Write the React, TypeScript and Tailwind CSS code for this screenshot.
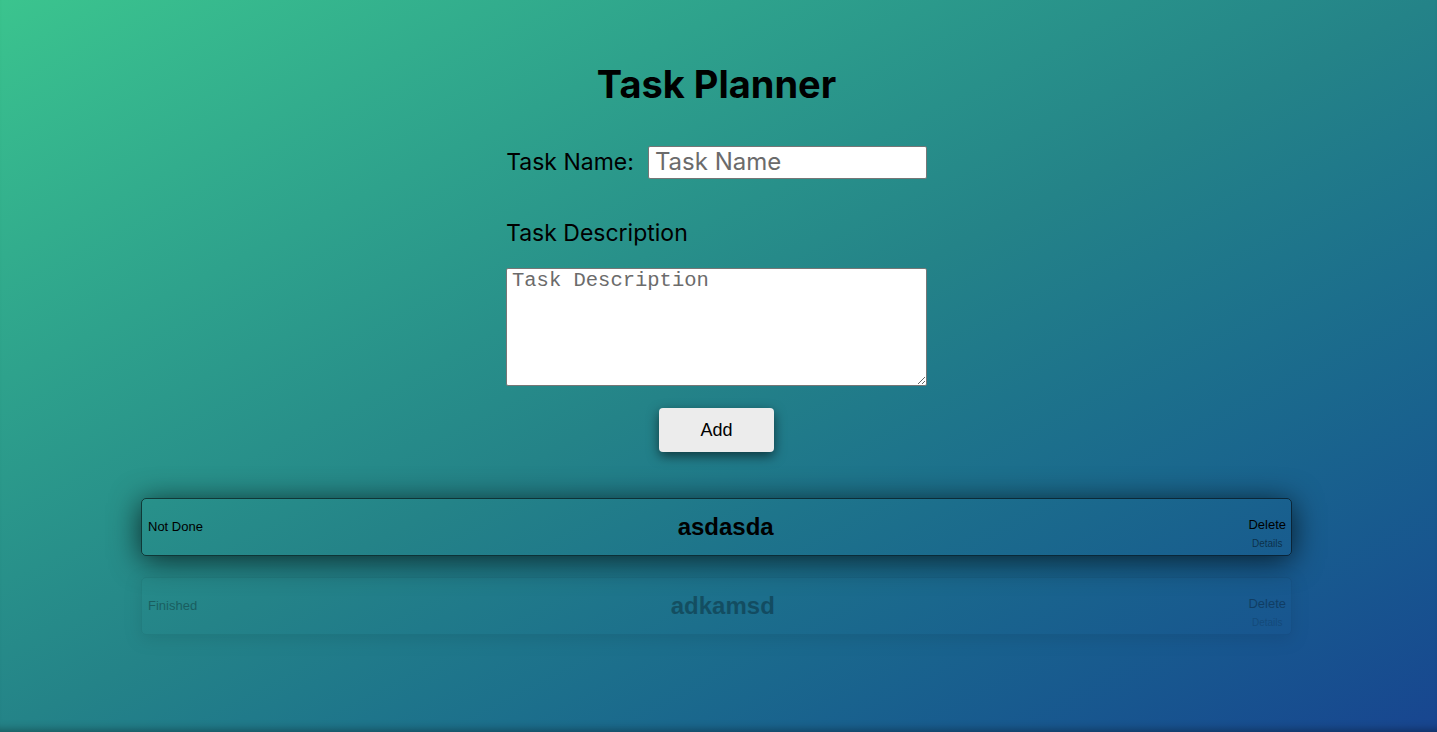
import { useState } from "react";

type Task = { name: string; done: boolean };

const TaskRow = ({ task }: { task: Task }) => {
  return (
    <div
      className={
        task.done
          ? "flex w-[1151px] h-[58px] items-center justify-between rounded-[5px] border border-black/20 pl-[6px] pr-[5px] opacity-30 shadow-[0_4px_16px_rgba(0,0,0,0.3)]"
          : "flex w-[1151px] h-[58px] items-center justify-between rounded-[5px] border border-black/60 pl-[6px] pr-[5px] shadow-[0_4px_30px_rgba(0,0,0,0.7)]"
      }
    >
      <span className="text-[13px] text-black">{task.done ? "Finished" : "Not Done"}</span>
      <span className="text-[24px] font-bold text-black">{task.name}</span>
      <div className="flex flex-col items-center mt-[14px]">
        <button className="text-[13px] text-black leading-[18px]">Delete</button>
        <span className="text-[10px] text-black/50 leading-[14px] mt-[3px]">Details</span>
      </div>
    </div>
  );
};

export default function App() {
  const [tasks] = useState<Task[]>([
    { name: "asdasda", done: false },
    { name: "adkamsd", done: true },
  ]);

  return (
    <div
      className="h-[732px] w-full overflow-hidden pr-[4px] bg-gradient-to-br from-[#3bc48e] via-[#248388] to-[#184590] flex flex-col items-center shadow-[inset_0_-10px_10px_-8px_rgba(0,0,0,0.35)]"
      style={{ fontFamily: '"Liberation Sans", Arial, sans-serif' }}
    >
      <h1 className="mt-[60px] text-[38px] font-bold text-black leading-[48px] font-[Inter,sans-serif]">
        Task Planner
      </h1>

      <div className="mt-[37px] flex items-center font-[Inter,sans-serif]">
        <label className="text-[23px] text-black mr-[14px]">Task Name:</label>
        <input
          placeholder="Task Name"
          className="w-[279px] h-[33px] bg-white border border-[#767676] rounded-[2px] px-[6px] text-[24px] placeholder:text-[#6b6b6b] outline-none"
        />
      </div>

      <div className="mt-[38px] w-[421px] font-[Inter,sans-serif]">
        <label className="block text-[23px] text-black leading-[30px]">Task Description</label>
        <textarea
          placeholder="Task Description"
          className="mt-[20px] block w-[421px] h-[118px] bg-white border border-[#767676] rounded-[2px] px-[5px] py-0 leading-[24px] text-[20.5px] placeholder:text-[#6b6b6b] outline-none font-['Liberation_Mono',monospace]"
        />
      </div>

      <button className="mt-[22px] w-[115px] h-[44px] rounded-[4px] bg-[#ececec] text-[18px] text-black pt-[2px] shadow-[0_4px_12px_rgba(0,0,0,0.55)]">
        Add
      </button>

      <div className="mt-[46px] flex flex-col gap-[21px]">
        {tasks.map((t) => (
          <TaskRow key={t.name} task={t} />
        ))}
      </div>
    </div>
  );
}
